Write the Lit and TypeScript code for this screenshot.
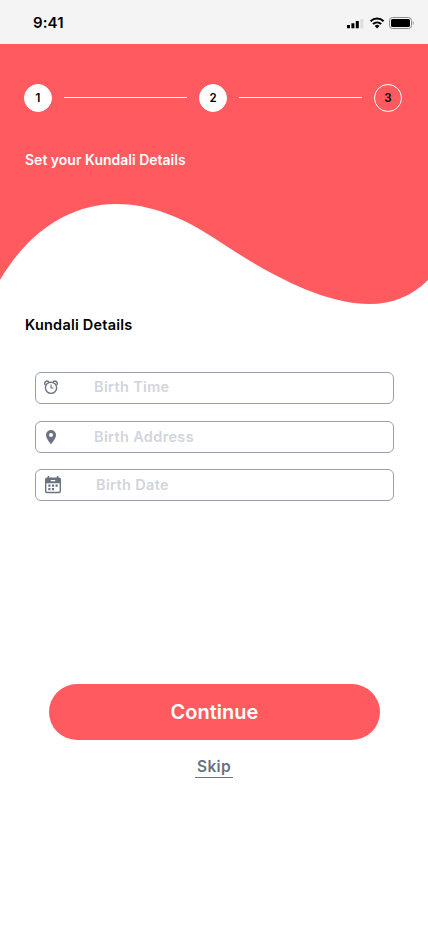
import { LitElement, html, css, svg } from "lit";
import { customElement } from "lit/decorators.js";

const clock = svg`<svg width="14" height="15" viewBox="0 0 14 15" fill="none" stroke="#6b7280">
  <circle cx="7" cy="7.8" r="5.6" stroke-width="1.4"/>
  <path d="M7 4.6V8H9.5" stroke-width="1.1"/>
  <path d="M1.2 5.2C-.4 2.2 2.6-.3 5 1.9M12.8 5.2C14.4 2.2 11.4-.3 9 1.9" stroke-width="1.4"/></svg>`;
const pin = svg`<svg width="10" height="15" viewBox="0 0 10 15"><path fill="#6b7280" fill-rule="evenodd" d="M5 0a5 5 0 0 0-5 5.1C0 8.8 5 14.4 5 14.4S10 8.8 10 5.1A5 5 0 0 0 5 0Zm0 3.1a2 2 0 1 1 0 4 2 2 0 0 1 0-4Z"/></svg>`;
const calendar = svg`<svg width="16" height="18" viewBox="0 0 16 18">
  <path fill="#6b7280" fill-rule="evenodd" d="M2.6 1.4V.6a.7.7 0 0 1 1.6 0v.8h7.6V.6a.7.7 0 0 1 1.6 0v.8h.6a2 2 0 0 1 2 2v11.8a2 2 0 0 1-2 2H2a2 2 0 0 1-2-2V3.4a2 2 0 0 1 2-2ZM5.8 4v1.3h4.4V4ZM1.4 7.2v7.6c0 .7.4 1 1 1h11.2c.6 0 1-.3 1-1V7.2Z"/>
  <path fill="#6b7280" d="M3.3 8.5h2.2v2.2H3.3zM6.9 8.5h2.2v2.2H6.9zM10.5 8.5h2.2v2.2h-2.2zM3.3 12h2.2v2.2H3.3zM6.9 12h2.2v2.2H6.9z"/></svg>`;

@customElement("app-root")
export class AppRoot extends LitElement {
  static styles = css`
    :host { display: block; height: 926px; background: #fff; font-family: Inter, "Liberation Sans", sans-serif; font-weight: 600; overflow: hidden; }
    .status { height: 44px; box-sizing: border-box; background: #f4f4f4; display: flex; justify-content: space-between; padding: 0 14px 0 33px; align-items: center; }
    .time { font-size: 15px; line-height: 20px; color: #000; padding-top: 2px; letter-spacing: .1px; }
    .status svg { margin-top: 2px; }
    .hero { position: relative; height: 260px; }
    .wave { position: absolute; inset: 0; display: block; }
    .content { position: relative; padding: 40px 26px 0 24px; }
    .steps { display: flex; align-items: center; gap: 12px; }
    .step { width: 28px; height: 28px; box-sizing: border-box; border: 1px solid #fff; border-radius: 50%; background: #fff; color: #000; font-size: 11.5px; font-weight: 600; display: flex; align-items: center; justify-content: center; }
    .step.todo { background: none; }
    .line { flex: 1; height: 1px; background: #fff; margin-bottom: 1px; }
    h1, h2 { margin: 0; font-weight: 600; line-height: 20px; }
    h1 { font-size: 14px; color: #fff; margin: 38px 0 0 1px; }
    h2 { font-size: 14.5px; color: #000; margin: 11px 0 0 25px; letter-spacing: .22px; }
    .form { display: flex; flex-direction: column; gap: 16px; padding: 37px 34px 0 35px; }
    .field { height: 32px; box-sizing: border-box; border: 1px solid #999fb0; border-radius: 6px; display: flex; align-items: center; color: #d1d5db; font-size: 14.5px; line-height: 20px; letter-spacing: .35px; }
    .field:first-child { margin-bottom: 1px; }
    .icon { width: 58px; display: flex; padding-left: 8px; box-sizing: border-box; }
    .icon.clock { padding-bottom: 1px; }
    .icon.pin { padding-left: 10px; }
    .icon.calendar { width: 60px; padding-left: 9px; }
    .label { padding-bottom: 2px; }
    .pin + .label { padding-bottom: 0; }
    .calendar + .label { padding-bottom: 0; }
    .actions { display: flex; flex-direction: column; align-items: center; margin-top: 183px; padding-left: 1px; }
    button { font: inherit; border: 0; padding: 0; }
    .continue { width: 331px; height: 56px; border-radius: 28px; background: #ff5a60; color: #fff; font-size: 20px; }
    .skip { width: 38px; margin: 15px 1px 0 0; height: 23px; line-height: 24px; box-sizing: border-box; background: none; border-bottom: 1px solid #6b7280; color: #6b7280; font-size: 15.5px; letter-spacing: .3px; }
  `;

  field(kind: string, icon: unknown, label: string) {
    return html`<div class="field"><span class="icon ${kind}">${icon}</span><span class="label">${label}</span></div>`;
  }

  render() {
    return html`
      <div class="status">
        <span class="time">9:41</span>
        <svg width="67" height="12" viewBox="0 0 67 12">
          <path d="M0 8h3v3.3H0zM4.4 6.3h3v5h-3zM8.8 4h3v7.3h-3z"/>
          <path fill="#dedede" d="M13.3 2h3v9.3h-3z"/>
          <g fill="none" stroke="#000" stroke-width="2">
            <path d="M23.6 4.2a9.4 9.4 0 0 1 13 0M26 7a6 6 0 0 1 8.2 0"/>
          </g>
          <path d="M27.8 8.9a3.4 3.4 0 0 1 4.6 0l-2.3 2.5Z"/>
          <rect x="42.5" y=".5" width="22" height="11" rx="3" fill="none" stroke="#8c8c8c"/>
          <rect x="44" y="2" width="19" height="8" rx="1.5"/>
          <path fill="#999" d="M65.8 4v4c1.3-.6 1.3-3.4 0-4Z"/>
        </svg>
      </div>
      <div class="hero">
        <svg class="wave" width="428" height="260" viewBox="0 44 428 260">
          <path fill="#ff5a60" d="M0 44V280C28 232 70 204 116 204C150 204 182 217 214 238C262 270 320 304 370 304C392 304 412 296 428 280V44Z"/>
        </svg>
        <div class="content">
          <div class="steps">
            <span class="step">1</span><span class="line"></span>
            <span class="step">2</span><span class="line"></span>
            <span class="step todo">3</span>
          </div>
          <h1>Set your Kundali Details</h1>
        </div>
      </div>
      <h2>Kundali Details</h2>
      <div class="form">
        ${this.field("clock", clock, "Birth Time")}
        ${this.field("pin", pin, "Birth Address")}
        ${this.field("calendar", calendar, "Birth Date")}
      </div>
      <div class="actions">
        <button class="continue">Continue</button>
        <button class="skip">Skip</button>
      </div>`;
  }
}
